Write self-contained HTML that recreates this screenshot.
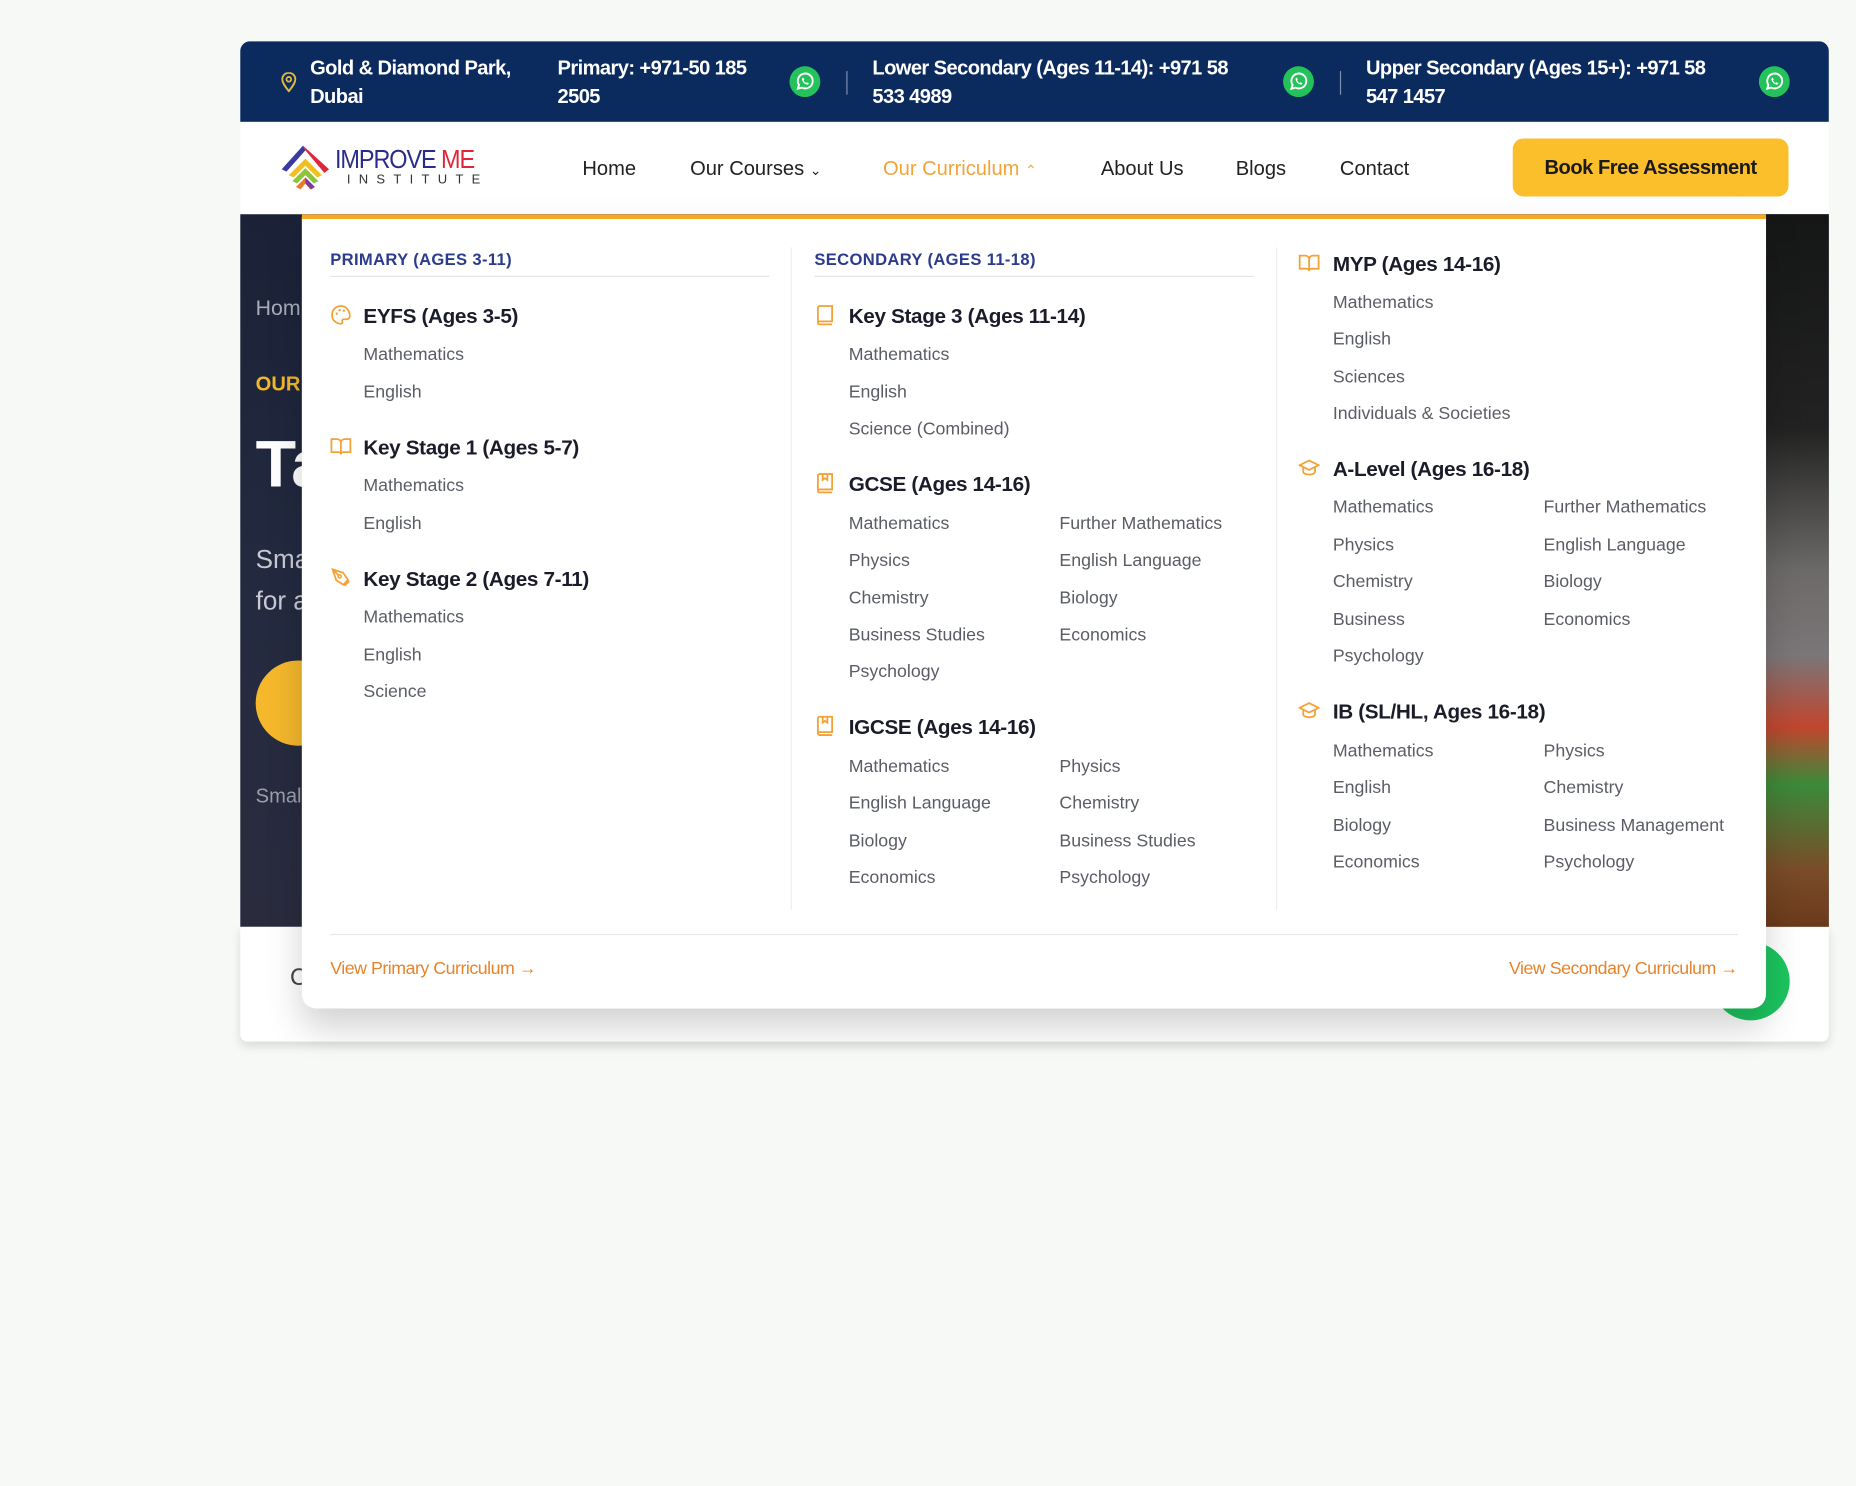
<!DOCTYPE html>
<html><head><meta charset="utf-8"><style>
*{margin:0;padding:0;box-sizing:border-box}
html,body{width:1856px;height:1485px;overflow:hidden;background:#f7f9f7;font-family:"Liberation Sans",sans-serif}
#w{position:absolute;left:0;top:0;width:1568px;height:1255px;transform:scale(1.18367);transform-origin:0 0}
.a{position:absolute;white-space:nowrap}
.top{left:203px;top:35px;width:1342px;height:68px;background:#0b2b5f;border-radius:8px 8px 0 0;color:#fff;font-size:17px;font-weight:bold;letter-spacing:-.5px;line-height:24px}
.wa{width:26px;height:26px;border-radius:50%;background:#25c15a;position:absolute;top:21px}
.sep{position:absolute;top:25px;width:1px;height:20px;background:#7d8fb0}
.nav{left:203px;top:103px;width:1342px;height:78px;background:#fff}
.nl{font-size:17px;color:#222;top:132px;line-height:22px}
.hero{left:203px;top:181px;width:1342px;height:602px;background:linear-gradient(180deg,#1b2238 0%,#232a40 50%,#2a2c3e 100%)}
.rstrip{left:1492px;top:181px;width:53px;height:602px;background:linear-gradient(180deg,#151616 0%,#222 30%,#6c6a68 50%,#7b7678 62%,#c0462e 72%,#3b8a3a 80%,#7a4c28 92%,#6b3a1b 100%)}
.under{left:203px;top:783px;width:1342px;height:97px;background:#fff;box-shadow:0 4px 8px rgba(0,0,0,.12);border-radius:0 0 6px 6px}
.dd{left:255px;top:181px;width:1237px;height:671px;background:#fff;border-top:4px solid #f6a723;border-radius:0 0 12px 12px;box-shadow:0 16px 30px rgba(0,0,0,.18)}
.h{font-size:14px;font-weight:bold;color:#2c3b8c;letter-spacing:.3px;line-height:18px}
.hl{height:1px;background:#e4e6ea;position:absolute}
.t{font-size:17.5px;font-weight:bold;color:#1b1c2a;line-height:22px;letter-spacing:-.3px;margin-top:1px}
.i{font-size:15px;color:#5a5d66;line-height:20px;margin-top:2px}
.ic{position:absolute;width:18px;height:18px}
.lk{font-size:15px;color:#e8832a;letter-spacing:-.4px;line-height:20px;margin-top:2px}
</style></head><body><div id="w">
<div class="a top">
 <svg class="a" style="left:34px;top:26px" width="14" height="17" viewBox="0 0 14 17"><path d="M7 16C3 11 1.5 8.5 1.5 6a5.5 5.5 0 0 1 11 0c0 2.5-1.5 5-5.5 10z" fill="none" stroke="#e2b93b" stroke-width="1.6"/><circle cx="7" cy="6" r="2" fill="none" stroke="#e2b93b" stroke-width="1.5"/></svg>
 <div class="a" style="left:59px;top:11px">Gold &amp; Diamond Park,<br>Dubai</div>
 <div class="a" style="left:268px;top:11px">Primary: +971-50 185<br>2505</div>
 <svg class="wa" style="left:464px" viewBox="0 0 26 26"><circle cx="13" cy="13" r="13" fill="#25c15a"/><path d="M7 19l1-3.2A6.3 6.3 0 1 1 10.4 18z" fill="none" stroke="#fff" stroke-width="1.6"/><path d="M10.5 10.5c0 2.5 2.5 5 5 5l1-1-1.5-1-1 .6c-1-.5-1.6-1.1-2.1-2.1l.6-1-1-1.5z" fill="#fff"/></svg>
 <div class="sep" style="left:512px"></div>
 <div class="a" style="left:534px;top:11px">Lower Secondary (Ages 11-14): +971 58<br>533 4989</div>
 <svg class="wa" style="left:881px" viewBox="0 0 26 26"><circle cx="13" cy="13" r="13" fill="#25c15a"/><path d="M7 19l1-3.2A6.3 6.3 0 1 1 10.4 18z" fill="none" stroke="#fff" stroke-width="1.6"/><path d="M10.5 10.5c0 2.5 2.5 5 5 5l1-1-1.5-1-1 .6c-1-.5-1.6-1.1-2.1-2.1l.6-1-1-1.5z" fill="#fff"/></svg>
 <div class="sep" style="left:929px"></div>
 <div class="a" style="left:951px;top:11px">Upper Secondary (Ages 15+): +971 58<br>547 1457</div>
 <svg class="wa" style="left:1283px" viewBox="0 0 26 26"><circle cx="13" cy="13" r="13" fill="#25c15a"/><path d="M7 19l1-3.2A6.3 6.3 0 1 1 10.4 18z" fill="none" stroke="#fff" stroke-width="1.6"/><path d="M10.5 10.5c0 2.5 2.5 5 5 5l1-1-1.5-1-1 .6c-1-.5-1.6-1.1-2.1-2.1l.6-1-1-1.5z" fill="#fff"/></svg>
</div>
<div class="a nav"></div>
<svg class="a" style="left:236px;top:121px" width="44" height="40" viewBox="0 0 44 40"><path d="M2 22L20 2 22 6 6 24z" fill="#3a3aa0"/><path d="M20 2L42 22 38 25 22 6z" fill="#e0263a"/><path d="M8 27L22 13 36 27 32 29 22 19 12 29z" fill="#f0c020"/><path d="M11 32L22 21 33 32 29 34 22 27 15 34z" fill="#8cc43c"/><path d="M14 37L22 29 30 37 26 39 22 34 18 39z" fill="#e87a2a"/><path d="M22 29L30 37 27 39 22 34z" fill="#7a3aa8"/></svg>
<div class="a" style="left:283px;top:122px;font-size:22px;color:#2a2c8a;letter-spacing:-1px;line-height:26px;transform:scaleX(.9);transform-origin:0 0">IMPROVE <span style="color:#e0263a">ME</span></div>
<div class="a" style="left:293px;top:146px;font-size:11px;letter-spacing:7px;color:#333;line-height:12px">INSTITUTE</div>
<div class="a nl" style="left:492px">Home</div>
<div class="a nl" style="left:583px">Our Courses <span style="font-size:12px">&#8964;</span></div>
<div class="a nl" style="left:746px;color:#f2a33a">Our Curriculum <span style="font-size:12px">&#8963;</span></div>
<div class="a nl" style="left:930px">About Us</div>
<div class="a nl" style="left:1044px">Blogs</div>
<div class="a nl" style="left:1132px">Contact</div>
<div class="a" style="left:1278px;top:117px;width:233px;height:49px;background:#fbbf2c;border-radius:9px;font-size:17px;font-weight:bold;color:#1a1a1a;text-align:center;line-height:50px;letter-spacing:-.4px">Book Free Assessment</div>
<div class="a hero"></div>
<div class="a rstrip"></div>
<div class="a" style="left:216px;top:250px;color:#a8adb8;font-size:18px">Hom</div>
<div class="a" style="left:216px;top:315px;color:#f3b82a;font-size:17px;font-weight:bold">OUR</div>
<div class="a" style="left:216px;top:362px;color:#fff;font-size:56px;font-weight:bold;line-height:60px">Ta</div>
<div class="a" style="left:216px;top:455px;color:#c8cad3;font-size:22px;line-height:35px">Sma<br>for a</div>
<div class="a" style="left:216px;top:558px;width:72px;height:72px;border-radius:50%;background:#f5b82c"></div>
<div class="a" style="left:216px;top:663px;color:#9ba0ab;font-size:17px">Smal</div>
<div class="a under"></div>
<div class="a" style="left:245px;top:815px;font-size:20px;color:#444">C</div>
<div class="a" style="left:1446px;top:796px;width:66px;height:66px;border-radius:50%;background:#1cc55f"></div>
<div class="a dd"></div>
<div class="a h" style="left:279px;top:210px">PRIMARY (AGES 3-11)</div><div class="hl" style="left:279px;top:233px;width:371px"></div>
<div class="a h" style="left:688px;top:210px">SECONDARY (AGES 11-18)</div><div class="hl" style="left:688px;top:233px;width:371px"></div>
<div class="a" style="left:668px;top:209px;width:1px;height:560px;background:#eceef1"></div>
<div class="a" style="left:1078px;top:209px;width:1px;height:560px;background:#eceef1"></div>
<div class="hl" style="left:279px;top:789px;width:1189px"></div>
<svg class="ic" style="left:279px;top:257px" viewBox="0 0 18 18"><path d="M9 1.5a7.5 7.5 0 1 0 0 15c1.2 0 1.6-.8 1.2-1.8-.5-1 .2-2 1.3-2H14a2.5 2.5 0 0 0 2.5-2.5C16.5 5 13 1.5 9 1.5z" fill="none" stroke="#f4a136" stroke-width="1.5"/><circle cx="5.5" cy="8" r="1" fill="#f4a136"/><circle cx="8" cy="5" r="1" fill="#f4a136"/><circle cx="11.5" cy="5.5" r="1" fill="#f4a136"/></svg>
<svg class="ic" style="left:279px;top:368px" viewBox="0 0 18 18"><path d="M1 3h5a3 3 0 0 1 3 3v10a2 2 0 0 0-2-2H1zM17 3h-5a3 3 0 0 0-3 3v10a2 2 0 0 1 2-2h6z" fill="none" stroke="#f4a136" stroke-width="1.5"/></svg>
<svg class="ic" style="left:279px;top:479px" viewBox="0 0 18 18"><path d="M2 2l9 3 4 6-4 4-6-4zM2 2l5 5" fill="none" stroke="#f4a136" stroke-width="1.5"/><circle cx="8" cy="8" r="1.3" fill="none" stroke="#f4a136" stroke-width="1.3"/><path d="M12 16l4-4" stroke="#f4a136" stroke-width="1.5"/></svg>
<svg class="ic" style="left:688px;top:257px" viewBox="0 0 18 18"><path d="M3 15V3a1.5 1.5 0 0 1 1.5-1.5H15v13H4.5A1.5 1.5 0 0 0 3 16a1.5 1.5 0 0 0 1.5 1H15" fill="none" stroke="#f4a136" stroke-width="1.5"/></svg>
<svg class="ic" style="left:688px;top:399px" viewBox="0 0 18 18"><path d="M3 15V3a1.5 1.5 0 0 1 1.5-1.5H15v13H4.5A1.5 1.5 0 0 0 3 16a1.5 1.5 0 0 0 1.5 1H15M7 1.5v5l2-1.5 2 1.5v-5" fill="none" stroke="#f4a136" stroke-width="1.5"/></svg>
<svg class="ic" style="left:688px;top:604px" viewBox="0 0 18 18"><path d="M3 15V3a1.5 1.5 0 0 1 1.5-1.5H15v13H4.5A1.5 1.5 0 0 0 3 16a1.5 1.5 0 0 0 1.5 1H15M7 1.5v5l2-1.5 2 1.5v-5" fill="none" stroke="#f4a136" stroke-width="1.5"/></svg>
<svg class="ic" style="left:1097px;top:213px" viewBox="0 0 18 18"><path d="M1 3h5a3 3 0 0 1 3 3v10a2 2 0 0 0-2-2H1zM17 3h-5a3 3 0 0 0-3 3v10a2 2 0 0 1 2-2h6z" fill="none" stroke="#f4a136" stroke-width="1.5"/></svg>
<svg class="ic" style="left:1097px;top:386px" viewBox="0 0 18 18"><path d="M1 7l8-4 8 4-8 4zM4 8.5v4c0 1.5 2.5 2.5 5 2.5s5-1 5-2.5v-4" fill="none" stroke="#f4a136" stroke-width="1.5"/></svg>
<svg class="ic" style="left:1097px;top:591px" viewBox="0 0 18 18"><path d="M1 7l8-4 8 4-8 4zM4 8.5v4c0 1.5 2.5 2.5 5 2.5s5-1 5-2.5v-4" fill="none" stroke="#f4a136" stroke-width="1.5"/></svg>
<div class="a t" style="left:307px;top:255px">EYFS (Ages 3-5)</div>
<div class="a i" style="left:307px;top:288px">Mathematics</div><div class="a i" style="left:307px;top:320px">English</div>
<div class="a t" style="left:307px;top:366px">Key Stage 1 (Ages 5-7)</div>
<div class="a i" style="left:307px;top:399px">Mathematics</div><div class="a i" style="left:307px;top:431px">English</div>
<div class="a t" style="left:307px;top:477px">Key Stage 2 (Ages 7-11)</div>
<div class="a i" style="left:307px;top:510px">Mathematics</div><div class="a i" style="left:307px;top:542px">English</div><div class="a i" style="left:307px;top:573px">Science</div>
<div class="a t" style="left:717px;top:255px">Key Stage 3 (Ages 11-14)</div>
<div class="a i" style="left:717px;top:288px">Mathematics</div><div class="a i" style="left:717px;top:320px">English</div><div class="a i" style="left:717px;top:351px">Science (Combined)</div>
<div class="a t" style="left:717px;top:397px">GCSE (Ages 14-16)</div>
<div class="a i" style="left:717px;top:431px">Mathematics</div><div class="a i" style="left:895px;top:431px">Further Mathematics</div>
<div class="a i" style="left:717px;top:462px">Physics</div><div class="a i" style="left:895px;top:462px">English Language</div>
<div class="a i" style="left:717px;top:494px">Chemistry</div><div class="a i" style="left:895px;top:494px">Biology</div>
<div class="a i" style="left:717px;top:525px">Business Studies</div><div class="a i" style="left:895px;top:525px">Economics</div>
<div class="a i" style="left:717px;top:556px">Psychology</div>
<div class="a t" style="left:717px;top:602px">IGCSE (Ages 14-16)</div>
<div class="a i" style="left:717px;top:636px">Mathematics</div><div class="a i" style="left:895px;top:636px">Physics</div>
<div class="a i" style="left:717px;top:667px">English Language</div><div class="a i" style="left:895px;top:667px">Chemistry</div>
<div class="a i" style="left:717px;top:699px">Biology</div><div class="a i" style="left:895px;top:699px">Business Studies</div>
<div class="a i" style="left:717px;top:730px">Economics</div><div class="a i" style="left:895px;top:730px">Psychology</div>
<div class="a t" style="left:1126px;top:211px">MYP (Ages 14-16)</div>
<div class="a i" style="left:1126px;top:244px">Mathematics</div><div class="a i" style="left:1126px;top:275px">English</div><div class="a i" style="left:1126px;top:307px">Sciences</div><div class="a i" style="left:1126px;top:338px">Individuals &amp; Societies</div>
<div class="a t" style="left:1126px;top:384px">A-Level (Ages 16-18)</div>
<div class="a i" style="left:1126px;top:417px">Mathematics</div><div class="a i" style="left:1304px;top:417px">Further Mathematics</div>
<div class="a i" style="left:1126px;top:449px">Physics</div><div class="a i" style="left:1304px;top:449px">English Language</div>
<div class="a i" style="left:1126px;top:480px">Chemistry</div><div class="a i" style="left:1304px;top:480px">Biology</div>
<div class="a i" style="left:1126px;top:512px">Business</div><div class="a i" style="left:1304px;top:512px">Economics</div>
<div class="a i" style="left:1126px;top:543px">Psychology</div>
<div class="a t" style="left:1126px;top:589px">IB (SL/HL, Ages 16-18)</div>
<div class="a i" style="left:1126px;top:623px">Mathematics</div><div class="a i" style="left:1304px;top:623px">Physics</div>
<div class="a i" style="left:1126px;top:654px">English</div><div class="a i" style="left:1304px;top:654px">Chemistry</div>
<div class="a i" style="left:1126px;top:686px">Biology</div><div class="a i" style="left:1304px;top:686px">Business Management</div>
<div class="a i" style="left:1126px;top:717px">Economics</div><div class="a i" style="left:1304px;top:717px">Psychology</div>
<div class="a lk" style="left:279px;top:807px">View Primary Curriculum &#8594;</div>
<div class="a lk" style="left:1260px;top:807px;width:208px;text-align:right">View Secondary Curriculum &#8594;</div>
</div></body></html>
